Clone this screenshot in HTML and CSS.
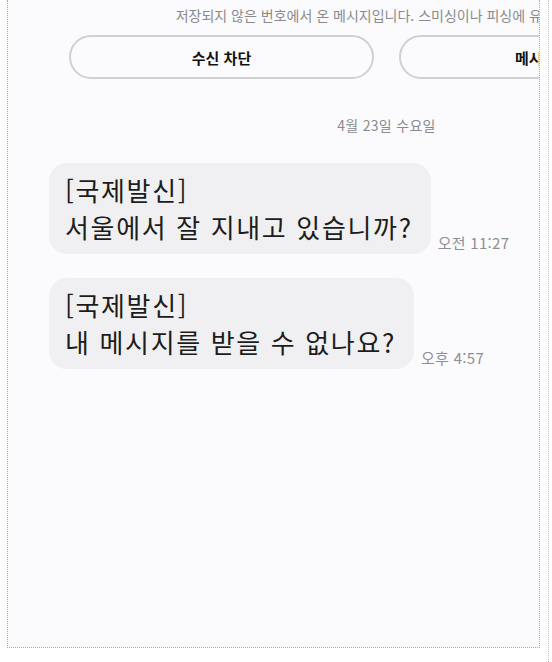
FILE: index.html
```html
<!DOCTYPE html>
<html lang="ko">
<head>
    <meta charset="UTF-8">
    <meta name="viewport" content="width=device-width, initial-scale=1.0">
    <title>Messages</title>
    <link rel="stylesheet" href="styles.css">
</head>
<body>
    <div class="frame">
        <div class="thread">
            <p class="notice">저장되지 않은 번호에서 온 메시지입니다. 스미싱이나 피싱에 유의하세요.</p>

            <div class="actions">
                <button type="button" class="action-btn">수신 차단</button>
                <button type="button" class="action-btn">메시지 신고</button>
            </div>

            <p class="date">4월 23일 수요일</p>

            <div class="messages">
                <div class="message-row">
                    <div class="bubble">[국제발신]<br>서울에서 잘 지내고 있습니까?</div>
                    <span class="time">오전 11:27</span>
                </div>
                <div class="message-row">
                    <div class="bubble">[국제발신]<br>내 메시지를 받을 수 없나요?</div>
                    <span class="time">오후 4:57</span>
                </div>
            </div>
        </div>
    </div>
    <div class="edge"></div>
</body>
</html>
```

FILE: styles.css
```css
* {
    margin: 0;
    padding: 0;
    box-sizing: border-box;
}

body {
    display: flex;
    height: 662px;
    background-color: #fff;
    font-family: "Noto Sans CJK KR", "Noto Sans", sans-serif;
    color: #1d1d1f;
    overflow: hidden;
}

.frame {
    margin-left: 7px;
    width: 533px;
    height: 648px;
    background-color: #fbfbfd;
    border: 1px dotted #eda23a;
    border-top: 0;
    overflow: hidden;
}

.edge {
    margin-left: 8px;
    width: 1px;
    height: 662px;
    border-left: 1px dotted #c4c4c4;
}

.thread {
    width: 757px;
}

.notice {
    padding-top: 5px;
    font-size: 14px;
    line-height: 20px;
    color: #8a8a8e;
    text-align: center;
    white-space: nowrap;
}

.actions {
    display: flex;
    gap: 25px;
    margin-top: 10px;
    padding: 0 61px;
}

.action-btn {
    flex: 1;
    height: 44px;
    border: 2px solid #d0d0d2;
    border-radius: 22px;
    background: transparent;
    font-family: inherit;
    font-size: 15px;
    font-weight: bold;
    color: #111;
    white-space: nowrap;
}

.date {
    margin-top: 36px;
    font-size: 14px;
    line-height: 20px;
    letter-spacing: 0.3px;
    color: #8a8a8e;
    text-align: center;
}

.messages {
    display: flex;
    flex-direction: column;
    gap: 24px;
    margin-top: 28px;
    padding-left: 41px;
}

.message-row {
    display: flex;
    align-items: flex-end;
    gap: 7px;
}

.bubble {
    padding: 8px 18px 9px 16px;
    border-radius: 18px;
    background-color: #f0f0f2;
    font-size: 26px;
    line-height: 37px;
    letter-spacing: 1.65px;
    color: #1c1c1c;
    white-space: nowrap;
}

.time {
    margin-bottom: 2px;
    font-size: 15px;
    line-height: 18px;
    letter-spacing: 0.3px;
    color: #8e8e93;
    white-space: nowrap;
}
```
